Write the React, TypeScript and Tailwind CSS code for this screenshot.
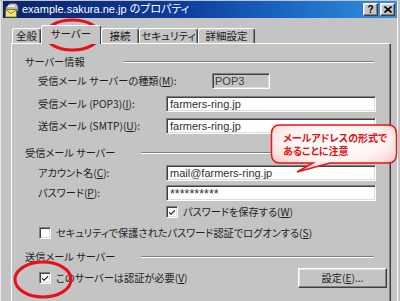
import React from "react";

const jp = "font-['Noto_Sans_CJK_JP','Noto_Sans_CJK_SC',sans-serif] [font-feature-settings:'palt']";
const sunken =
  "border border-t-[#808080] border-l-[#808080] border-b-white border-r-white shadow-[inset_1px_1px_0_#404040,inset_-1px_-1px_0_#dcdcdc]";
const raised =
  "border border-t-white border-l-white border-b-[#404040] border-r-[#404040] shadow-[inset_-1px_-1px_0_#808080,inset_1px_1px_0_#e4e4e4]";

function U({ c }: { c: string }) {
  return <span className="underline underline-offset-[1px]">{c}</span>;
}

function Tab({ label, w, selected }: { label: string; w: number; selected?: boolean }) {
  if (selected) {
    return (
      <div
        style={{ width: w }}
        className="relative z-10 -mb-px h-[19px] bg-[#c4c4c4] border-t border-l border-r border-t-white border-l-white border-r-[#404040] rounded-t-[3px] flex items-center justify-center text-[10.5px] whitespace-nowrap text-[#1a1a1a] pb-[2px]"
      >
        {label}
      </div>
    );
  }
  return (
    <div
      style={{ width: w }}
      className="h-[15px] bg-[#c4c4c4] border-t border-l border-r border-t-white border-l-white border-r-[#404040] rounded-t-[3px] flex items-center justify-center text-[10.5px] whitespace-nowrap text-[#1a1a1a] shadow-[inset_-1px_0_0_#808080]"
    >
      {label}
    </div>
  );
}

function GroupHeader({ label, lineStart, mt }: { label: string; lineStart: number; mt: number }) {
  return (
    <div className="relative h-[14px] flex items-center" style={{ marginTop: mt }}>
      <span className="pl-[13px] whitespace-nowrap">{label}</span>
      <div
        className="absolute h-[2px] border-t border-t-[#808080] border-b border-b-white"
        style={{ left: lineStart - 11, width: 373 - lineStart, top: 6 }}
      />
    </div>
  );
}

function Check({ checked }: { checked?: boolean }) {
  return (
    <div className={`w-[12px] h-[12px] bg-white ${sunken} flex items-center justify-center shrink-0`}>
      {checked && (
        <svg width="8" height="8" viewBox="0 0 8 8">
          <path d="M1 3.5 L3 5.5 L7 1.5 L7 3 L3 7 L1 5 Z" fill="#111" />
        </svg>
      )}
    </div>
  );
}

const inputText = "text-[11px] text-[#303030] font-['Liberation_Sans',sans-serif]";

export default function App() {
  return (
    <div className={`relative w-[400px] h-[301px] overflow-hidden bg-[#c4c4c4] ${jp}`}>
      <div className="h-full w-[398px] pl-[2px] border-l border-l-[#e8e8e8] border-r border-r-white">
        {/* Title bar */}
        <div className="mt-px h-[17px] w-[394px] flex items-center bg-[linear-gradient(to_right,#0a2468,#0e3c9c_45%,#1c6cc8_75%,#3490dc)]">
          <div className="ml-[1px] w-[16px] h-[16px] shrink-0">
            <svg width="16" height="16" viewBox="0 0 16 16">
              <path d="M2 5 L6 1.5 L12 1.5 L14 4 L14 9 L2 9 Z" fill="#b8b8b8" stroke="#606060" strokeWidth="0.8" />
              <rect x="4" y="3" width="7" height="2" fill="#e8e8e8" />
              <rect x="1.5" y="7.5" width="11" height="7.5" fill="#f6e27a" stroke="#7a6a10" strokeWidth="0.8" />
              <path d="M1.8 7.8 L7 11.5 L12.2 7.8" fill="none" stroke="#7a6a10" strokeWidth="0.8" />
            </svg>
          </div>
          <span className="ml-[2px] text-[11px] leading-none text-white whitespace-nowrap font-['Liberation_Sans','Noto_Sans_CJK_JP',sans-serif] [font-feature-settings:'palt']">
            example.sakura.ne.jp のプロパティ
          </span>
          <div className="flex-1" />
          <div className="flex gap-[2px] pr-[2px]">
            <div className={`w-[15px] h-[13px] bg-[#c4c4c4] ${raised} flex items-center justify-center text-[10px] font-bold leading-none text-black font-['Liberation_Sans',sans-serif]`}>
              ?
            </div>
            <div className={`w-[15px] h-[13px] bg-[#c4c4c4] ${raised} flex items-center justify-center`}>
              <svg width="8" height="7" viewBox="0 0 8 7">
                <path d="M0.5 0.5 L7.5 6.5 M7.5 0.5 L0.5 6.5" stroke="#000" strokeWidth="1.6" />
              </svg>
            </div>
          </div>
        </div>

        {/* Tabs */}
        <div className="h-[25px] flex items-end pl-[9px]">
          <Tab label="全般" w={29} />
          <Tab label="サーバー" w={60} selected />
          <Tab label="接続" w={38} />
          <Tab label="セキュリティ" w={59} />
          <Tab label="詳細設定" w={57} />
        </div>

        {/* Panel */}
        <div className="ml-[8px] w-[380px] h-[300px] border-t border-l border-t-white border-l-white border-r border-r-[#404040] shadow-[inset_-1px_0_0_#808080] flex flex-col text-[10.2px] text-[#1e1e1e]">
          <GroupHeader label="サーバー情報" lineStart={123} mt={11} />

          <div className="mt-[4px] h-[16px] flex items-center">
            <span className="pl-[26px] w-[200px] whitespace-nowrap">
              受信メール サーバーの種類(<U c="M" />):
            </span>
            <div className={`w-[58px] h-[16px] bg-[#c4c4c4] ${sunken} flex items-center pl-[2px] text-[11px] text-[#404040] font-['Liberation_Sans',sans-serif]`}>
              POP3
            </div>
          </div>

          <div className="mt-[7px] h-[16px] flex items-center">
            <span className="pl-[26px] w-[154px] whitespace-nowrap">
              受信メール (POP3)(<U c="I" />):
            </span>
            <div className={`w-[210px] h-[16px] bg-white ${sunken} flex items-center pl-[3px] ${inputText}`}>
              farmers-ring.jp
            </div>
          </div>

          <div className="mt-[6px] h-[16px] flex items-center">
            <span className="pl-[26px] w-[154px] whitespace-nowrap">
              送信メール (SMTP)(<U c="U" />):
            </span>
            <div className={`w-[210px] h-[16px] bg-white ${sunken} flex items-center pl-[3px] ${inputText}`}>
              farmers-ring.jp
            </div>
          </div>

          <GroupHeader label="受信メール サーバー" lineStart={140} mt={12} />

          <div className="mt-[5px] h-[16px] flex items-center">
            <span className="pl-[26px] w-[154px] whitespace-nowrap">
              アカウント名(<U c="C" />):
            </span>
            <div className={`w-[210px] h-[16px] bg-white ${sunken} flex items-center pl-[3px] ${inputText}`}>
              mail@farmers-ring.jp
            </div>
          </div>

          <div className="mt-[4px] h-[16px] flex items-center">
            <span className="pl-[26px] w-[154px] whitespace-nowrap">
              パスワード(<U c="P" />):
            </span>
            <div className={`w-[210px] h-[16px] bg-white ${sunken} flex items-center pl-[3px] pt-[3px] text-[12.5px] text-[#303030] font-['Liberation_Sans',sans-serif]`}>
              **********
            </div>
          </div>

          <div className="mt-[4px] h-[14px] flex items-center pl-[154px] gap-[5px]">
            <Check checked />
            <span className="whitespace-nowrap">
              パスワードを保存する(<U c="W" />)
            </span>
          </div>

          <div className="mt-[7px] h-[14px] flex items-center pl-[27px] gap-[5px]">
            <Check />
            <span className="whitespace-nowrap">
              セキュリティで保護されたパスワード認証でログオンする(<U c="S" />)
            </span>
          </div>

          <GroupHeader label="送信メール サーバー" lineStart={140} mt={10} />

          <div className="mt-[4px] h-[20px] flex items-center pl-[27px]">
            <Check checked />
            <span className="ml-[5px] whitespace-nowrap">
              このサーバーは認証が必要(<U c="V" />)
            </span>
            <div className="flex-1" />
            <div className={`mr-[3px] w-[89px] h-[20px] bg-[#c4c4c4] ${raised} flex items-center justify-center`}>
              設定(<U c="E" />)...
            </div>
          </div>
        </div>
      </div>

      {/* Red annotation ellipses */}
      <svg className="absolute left-0 top-0 pointer-events-none" width="400" height="301">
        <ellipse cx="72.5" cy="35" rx="27" ry="15" fill="none" stroke="#e8101a" strokeWidth="3" />
        <ellipse cx="43" cy="279.5" rx="28" ry="17.5" fill="none" stroke="#e8101a" strokeWidth="3" />
      </svg>

      {/* Callout */}
      <div className="absolute left-[268px] top-[122px] w-[132px] h-[54px] pointer-events-none">
        <svg width="132" height="54" viewBox="0 0 132 54" className="absolute left-0 top-0">
          <defs>
            <radialGradient id="cg" cx="0.5" cy="0.35" r="0.75">
              <stop offset="0" stopColor="#ffffff" />
              <stop offset="0.55" stopColor="#fff2f2" />
              <stop offset="1" stopColor="#ffb8b8" />
            </radialGradient>
          </defs>
          <path
            d="M12 3 H120 Q128.5 3 128.5 12 V32 Q128.5 41 120 41 H62 L29 50 L45 41 H12 Q3.5 41 3.5 32 V12 Q3.5 3 12 3 Z"
            fill="url(#cg)"
            stroke="#e01818"
            strokeWidth="1.5"
          />
        </svg>
        <div className="absolute left-[15px] top-[9px] text-[10px] leading-[13px] font-bold text-[#e41010] whitespace-nowrap">
          <div>メールアドレスの形式で</div>
          <div>あることに注意</div>
        </div>
      </div>
    </div>
  );
}
